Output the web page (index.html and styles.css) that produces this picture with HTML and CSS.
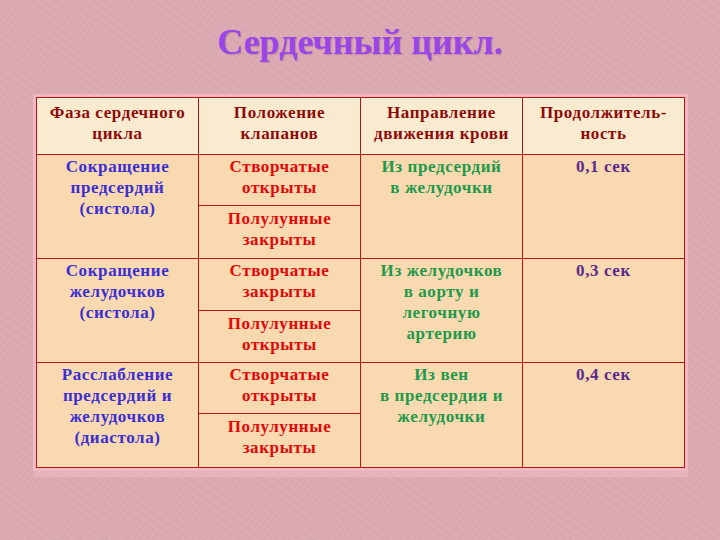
FILE: index.html
```html
<!DOCTYPE html>
<html lang="ru">
<head>
<meta charset="utf-8">
<title>Сердечный цикл</title>
<link rel="stylesheet" href="styles.css">
</head>
<body>
<div class="slide">
  <h1 class="title">Сердечный цикл.</h1>
  <table class="cycle">
    <colgroup><col class="c"><col class="c"><col class="c"><col class="c"></colgroup>
    <tr class="head">
      <th>Фаза сердечного<br>цикла</th>
      <th>Положение<br>клапанов</th>
      <th>Направление<br>движения крови</th>
      <th>Продолжитель-<br>ность</th>
    </tr>
    <tr class="r1a">
      <td rowspan="2" class="phase">Сокращение<br>предсердий<br>(систола)</td>
      <td class="valve">Створчатые<br>открыты</td>
      <td rowspan="2" class="dir">Из предсердий<br>в желудочки</td>
      <td rowspan="2" class="dur">0,1 сек</td>
    </tr>
    <tr class="r1b">
      <td class="valve">Полулунные<br>закрыты</td>
    </tr>
    <tr class="r2a">
      <td rowspan="2" class="phase">Сокращение<br>желудочков<br>(систола)</td>
      <td class="valve">Створчатые<br>закрыты</td>
      <td rowspan="2" class="dir">Из желудочков<br>в аорту и<br>легочную<br>артерию</td>
      <td rowspan="2" class="dur">0,3 сек</td>
    </tr>
    <tr class="r2b">
      <td class="valve">Полулунные<br>открыты</td>
    </tr>
    <tr class="r3a">
      <td rowspan="2" class="phase">Расслабление<br>предсердий и<br>желудочков<br>(диастола)</td>
      <td class="valve">Створчатые<br>открыты</td>
      <td rowspan="2" class="dir">Из вен<br>в предсердия и<br>желудочки</td>
      <td rowspan="2" class="dur">0,4 сек</td>
    </tr>
    <tr class="r3b">
      <td class="valve">Полулунные<br>закрыты</td>
    </tr>
  </table>
</div>
</body>
</html>
```
FILE: styles.css
```css
html, body {
  margin: 0;
  padding: 0;
}
body {
  width: 720px;
  height: 540px;
  overflow: hidden;
  background-color: #dba9b1;
  background-image:
    repeating-linear-gradient(35deg, rgba(255,255,255,0.05) 0 2px, rgba(0,0,0,0) 2px 7px),
    repeating-linear-gradient(-50deg, rgba(160,90,100,0.05) 0 1px, rgba(0,0,0,0) 1px 5px);
  font-family: "Liberation Serif", "Times New Roman", serif;
}
.slide {
  display: flex;
  flex-direction: column;
  align-items: center;
  padding-top: 22px;
}
.title {
  margin: 0 0 35px 0;
  font-size: 36px;
  line-height: 40px;
  font-weight: bold;
  color: #9a45e8;
  text-shadow: 1px 1px 1px rgba(120, 60, 120, 0.25);
}
.cycle {
  width: 649px;
  margin-left: 1px;
  border-collapse: collapse;
  table-layout: fixed;
  background: #f8d9b0;
  box-shadow: 0 0 0 3px rgba(245, 185, 198, 0.75), 0 6px 0 3px rgba(240, 190, 200, 0.5);
}
.cycle .c {
  width: 25%;
}
.cycle th,
.cycle td {
  border: 1px solid #b3141a;
  text-align: center;
  vertical-align: top;
  font-size: 17px;
  line-height: 21px;
  font-weight: bold;
  letter-spacing: 0.6px;
  padding: 1px 2px 0 2px;
}
.cycle th {
  background: #f9ebcf;
  color: #8e0a0a;
  padding-top: 4px;
}
.head { height: 57px; }
.r1a { height: 51px; }
.r1b { height: 53px; }
.r2a { height: 52px; }
.r2b { height: 52px; }
.r3a { height: 51px; }
.r3b { height: 54px; }
.phase { color: #3b2fd3; }
.valve { color: #e00808; }
.r1b .valve, .r2b .valve, .r3b .valve { padding-top: 2px; }
.dir { color: #1f9a4c; }
.dur {
  color: #5a2a8c;
  font-size: 19px;
  padding-top: 2px;
}
```
